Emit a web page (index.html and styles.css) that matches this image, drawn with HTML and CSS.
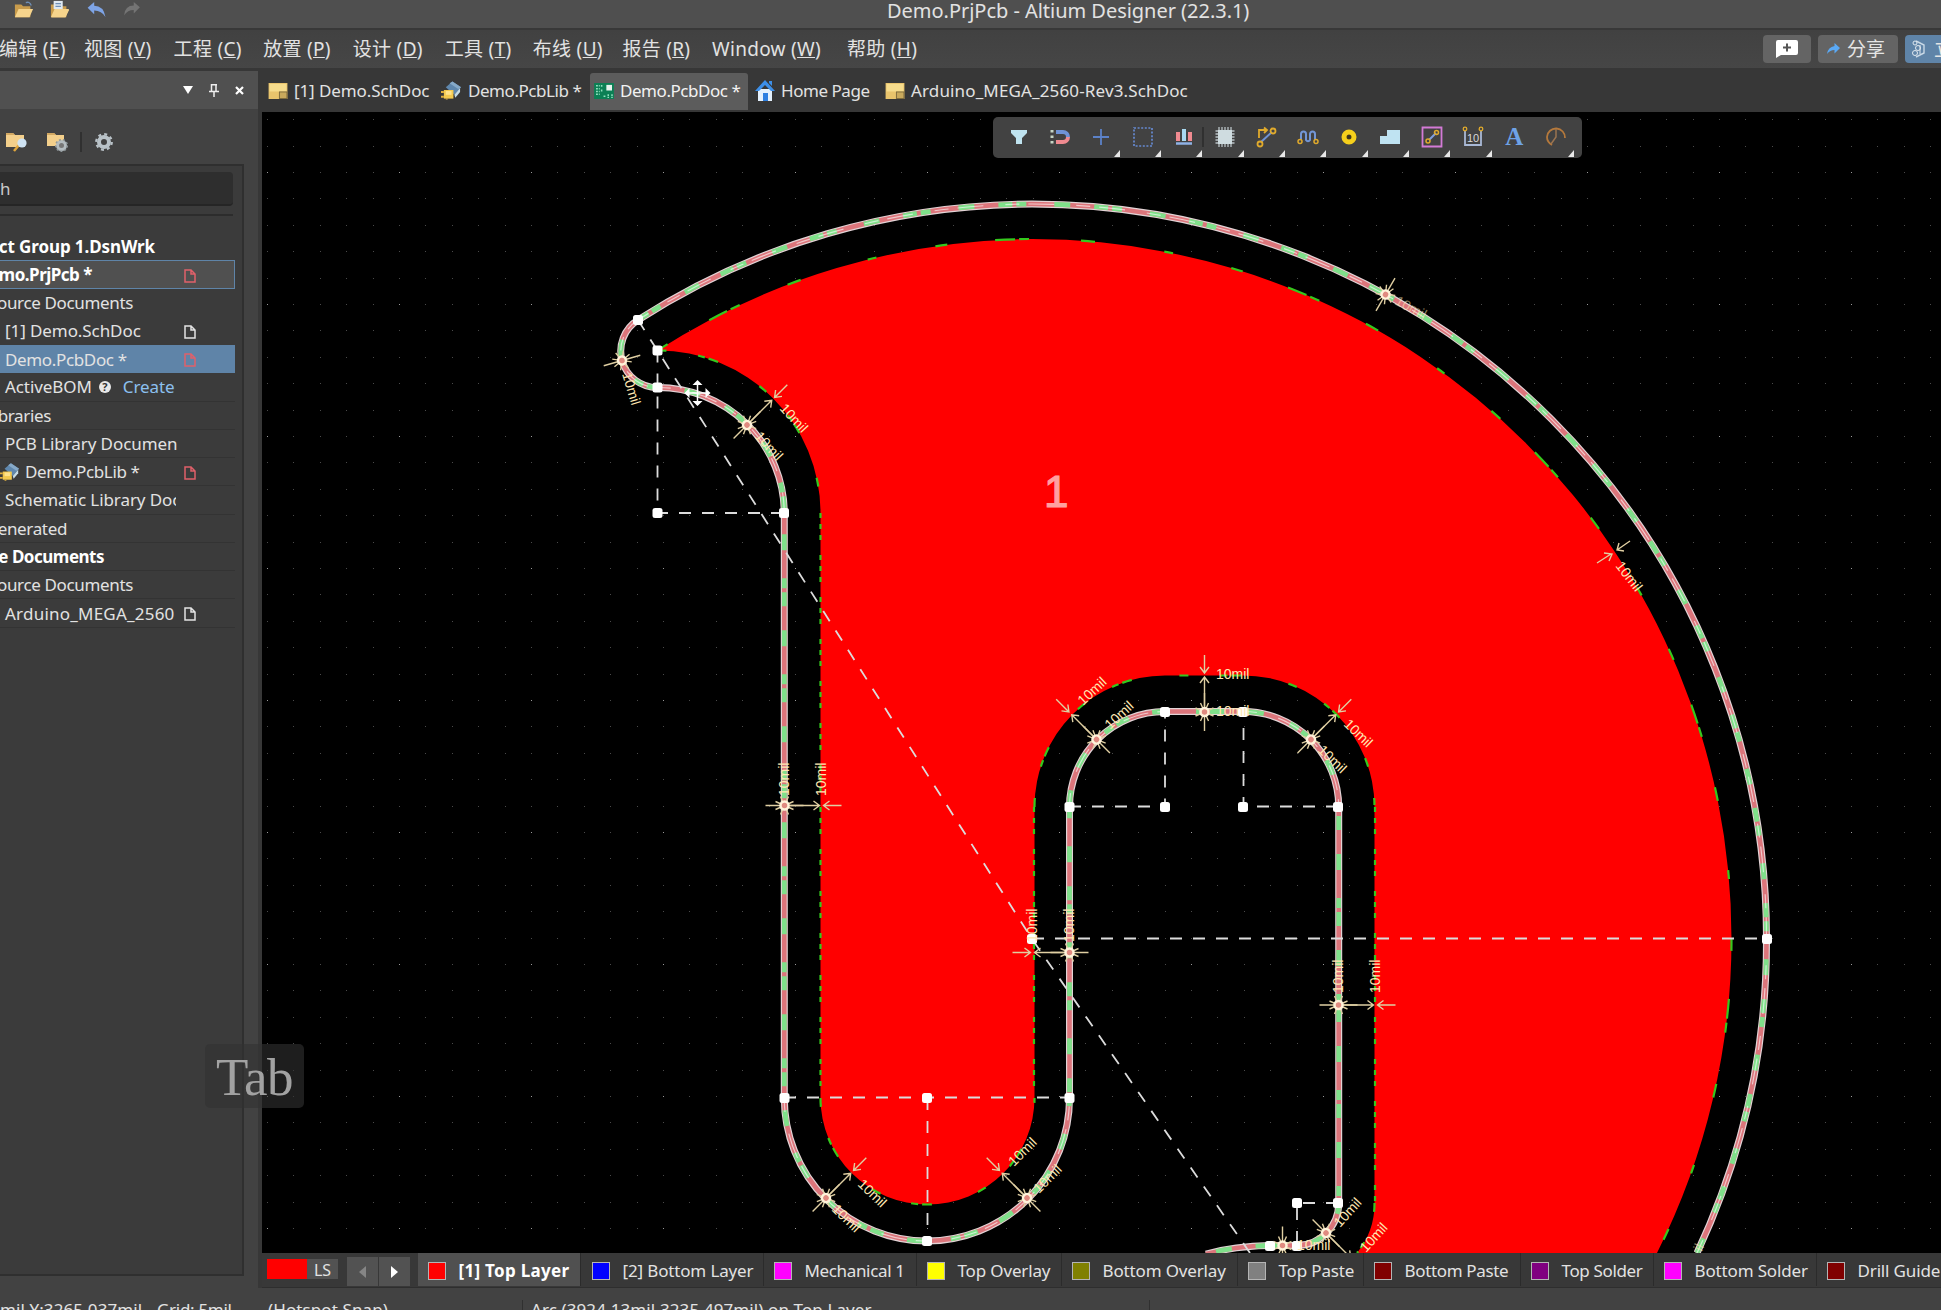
FILE: index.html
```html
<!DOCTYPE html>
<html lang="zh-CN">
<head>
<meta charset="utf-8">
<title>Demo.PrjPcb - Altium Designer (22.3.1)</title>
<link rel="stylesheet" href="styles.css">
</head>
<body>
<svg class="defs" width="0" height="0" aria-hidden="true">
  <defs>
    <symbol id="i-sch" viewBox="0 0 20 17"><path d="M0 0h20v17H0z" fill="#e9c46c"/><path d="M1 1h18v8H1z" fill="#f6dc8c"/><path d="M11 9h9v8h-9z" fill="#7d6a3c"/><path d="M12 10h7v6h-7z" fill="#c9a95c"/></symbol>
    <symbol id="i-lib" viewBox="0 0 22 19"><path d="M5 6l7-6 9 6-7 8z" fill="#5f87ad"/><path d="M12 0l9 6-3 2-9-6z" fill="#86a9c8"/><path d="M14 14l6-7v4l-5 6z" fill="#c5dbe6"/><path d="M3 9h10v9H3z" fill="#f3c94f"/><path d="M5 10h6v4H5z" fill="#ffe28a"/><path d="M0 11h3M0 16h3M6 18v1" stroke="#e0b040" stroke-width="2"/></symbol>
    <symbol id="i-pcb" viewBox="0 0 21 17"><path d="M0 0h21v17H0z" fill="#0b7f54"/><path d="M13 2h6v6h-6z" fill="#e6f3ee"/><path d="M2 3h4M2 6h4M2 9h4M2 12h4M8 2v3M8 7v3M10 14h3M15 12v4M19 12v4" stroke="#8fe0bd" stroke-width="1.6" stroke-dasharray="2 1"/></symbol>
    <symbol id="i-doc" viewBox="0 0 12 14"><path d="M1 1h6l4 4v8H1zM7 1v4h4" fill="none" stroke="currentColor" stroke-width="1.5"/></symbol>
    <symbol id="i-folder" viewBox="0 0 22 19"><path d="M1 4h7l2 2h8v12H1z" fill="#c99c4c"/><path d="M5 9h16l-4 9H1z" fill="#f6d48c"/></symbol>
    <symbol id="i-tri" viewBox="0 0 6 7"><path d="M6 0v7H0z" fill="#e8e8e8"/></symbol>
  </defs>
</svg>

<div class="app">
  <header class="titlebar">
    <div class="quick">
      <svg class="q-open" viewBox="0 0 22 20"><use href="#i-folder" width="22" height="19"/><path d="M13 2q4-2 6 3" fill="none" stroke="#6f8fb5" stroke-width="1.5"/></svg>
      <svg class="q-save" viewBox="0 0 22 20"><use href="#i-folder" width="22" height="19"/><path d="M4 0h10v9H4z" fill="#dfe9f2"/><path d="M6 3h6M6 6h6" stroke="#6f8fb5" stroke-width="1.4"/><path d="M5 10h16l-4 8H2z" fill="#f6d48c"/></svg>
      <svg class="q-undo" viewBox="0 0 20 16"><path d="M0 6l7-6v4q10 0 12 12-4-7-12-7v4z" fill="#7ea4e6"/></svg>
      <svg class="q-redo" viewBox="0 0 20 16"><path d="M19 6l-7-6v4Q2 4 1 15q4-6 11-6v4z" fill="#747474"/></svg>
    </div>
    <h1>Demo.PrjPcb - Altium Designer (22.3.1)</h1>
  </header>

  <nav class="menubar">
    <span class="m m1">编辑 (<u>E</u>)</span><span class="m">视图 (<u>V</u>)</span><span class="m">工程 (<u>C</u>)</span><span class="m">放置 (<u>P</u>)</span><span class="m m5">设计 (<u>D</u>)</span><span class="m m6">工具 (<u>T</u>)</span><span class="m">布线 (<u>U</u>)</span><span class="m">报告 (<u>R</u>)</span><span class="m m9">Window (<u>W</u>)</span><span class="m">帮助 (<u>H</u>)</span>
    <div class="actions">
      <button class="btn btn-note"><svg width="22" height="18" viewBox="0 0 22 18"><path d="M2 0h18q2 0 2 2v11q0 2-2 2H5l-5 3V2q0-2 2-2z" fill="#fff"/><path d="M11 3.500v8M7 7.500h8" stroke="#555" stroke-width="2"/></svg></button>
      <button class="btn btn-share"><svg width="13" height="12" viewBox="0 0 13 12"><path d="M13 5L7.500 0v3Q1 4 0 11q3-4 7.500-4v3.500z" fill="#5aa9f5"/></svg><span>分享</span></button>
      <button class="btn btn-blue"><svg width="13" height="18" viewBox="0 0 13 18"><path d="M4 1l8 4v8l-8 4" fill="none" stroke="#c8d8e6" stroke-width="1.400"/><circle cx="3" cy="3" r="2" fill="none" stroke="#dfe8ef"/><circle cx="6" cy="8" r="2.500" fill="none" stroke="#dfe8ef"/><circle cx="3" cy="13" r="2.500" fill="none" stroke="#dfe8ef"/><path d="M8 5v9" stroke="#dfe8ef"/></svg><span>立</span></button>
    </div>
  </nav>

  <div class="main">
    <aside class="panel">
      <div class="panel-head">
        <svg width="10" height="8" viewBox="0 0 10 8"><path d="M0 0h10L5 8z" fill="#fff"/></svg>
        <svg width="10" height="13" viewBox="0 0 10 13"><path d="M2.500 0v7M7 0v7M2 .700h6M0 7.500h10M5 8v5" stroke="#eee" stroke-width="1.500" fill="none"/></svg>
        <svg width="9" height="9" viewBox="0 0 9 9"><path d="M1 1l7 7M8 1L1 8" stroke="#fff" stroke-width="2.200"/></svg>
      </div>
      <div class="panel-tools">
        <svg width="22" height="20" viewBox="0 0 22 20"><path d="M0 1h7l2 2h9v12H0z" fill="#f3cf8b"/><path d="M0 1h7l2 2H0z" fill="#d2a862"/><path d="M13 13l-5 6" stroke="#e0a63c" stroke-width="2.500"/><circle cx="16" cy="11" r="4.600" fill="#cfe3f3"/></svg>
        <svg width="21" height="20" viewBox="0 0 21 20"><path d="M0 1h7l2 2h8v11H0z" fill="#f3cf8b"/><path d="M0 1h7l2 2H0z" fill="#d2a862"/><circle cx="14.500" cy="13.500" r="4" fill="#777" stroke="#b4bcc0" stroke-width="3"/><circle cx="14.500" cy="13.500" r="5.800" fill="none" stroke="#8f989c" stroke-width="1.500" stroke-dasharray="2 2"/></svg>
        <i></i>
        <svg width="18" height="18" viewBox="0 0 18 18"><circle cx="9" cy="9" r="5" fill="none" stroke="#b9c2c8" stroke-width="4"/><circle cx="9" cy="9" r="7.800" fill="none" stroke="#b9c2c8" stroke-width="2.200" stroke-dasharray="3 3.120"/></svg>
      </div>
      <div class="tree-frame">
        <div class="search">h</div>
        <div class="rule"></div>
        <ul class="tree">
          <li class="b e155"><span>ct Group 1.DsnWrk</span></li>
          <li class="b e92 project"><span>mo.PrjPcb *</span><svg class="doc red"><use href="#i-doc"/></svg></li>
          <li class="e133"><span>ource Documents</span></li>
          <li class="leaf mid"><span>[1] Demo.SchDoc</span><svg class="doc"><use href="#i-doc"/></svg></li>
          <li class="leaf selected"><span>Demo.PcbDoc *</span><svg class="doc red"><use href="#i-doc"/></svg></li>
          <li class="leaf line mid"><span>ActiveBOM</span><b class="help">?</b><em>Create</em></li>
          <li class="e51 line"><span>braries</span></li>
          <li class="leaf line mid"><span>PCB Library Documen</span></li>
          <li class="lib line"><svg width="20" height="18"><use href="#i-lib"/></svg><span>Demo.PcbLib *</span><svg class="doc red"><use href="#i-doc"/></svg></li>
          <li class="leaf line clip mid"><span>Schematic Library Doc</span></li>
          <li class="e67 line"><span>enerated</span></li>
          <li class="b e104 line"><span>e Documents</span></li>
          <li class="e133 line"><span>ource Documents</span></li>
          <li class="leaf line wide"><span>Arduino_MEGA_2560</span><svg class="doc"><use href="#i-doc"/></svg></li>
        </ul>
      </div>
    </aside>

    <section class="editor">
      <div class="tabs">
        <div class="tab t1"><svg width="20" height="16"><use href="#i-sch"/></svg><span>[1] Demo.SchDoc</span></div>
        <div class="tab t2"><svg width="21" height="19"><use href="#i-lib"/></svg><span>Demo.PcbLib *</span></div>
        <div class="tab t3 active"><svg width="20" height="16"><use href="#i-pcb"/></svg><span>Demo.PcbDoc *</span></div>
        <div class="tab t4"><svg width="20" height="21" viewBox="0 0 20 21"><path d="M3 9h14v12H3z" fill="#e4f0fc"/><path d="M0 11L10 0l10 11h-4l-6-6-6 6z" fill="#3d8fe8"/><path d="M14 1h3v5l-3-3z" fill="#3d8fe8"/><path d="M8 13h5v8H8z" fill="#2e7fe0"/></svg><span>Home Page</span></div>
        <div class="tab t5"><svg width="20" height="16"><use href="#i-sch"/></svg><span>Arduino_MEGA_2560-Rev3.SchDoc</span></div>
      </div>

      <div class="canvas">
        <svg class="board" width="1679" height="1141" viewBox="262 112 1679 1141">
          <defs>
            <pattern id="dots" patternUnits="userSpaceOnUse" x="267" y="172" width="132" height="132">
              <path fill="#4a4a4a" d="M26 0h1v1h-1zM53 0h1v1h-1zM79 0h1v1h-1zM106 0h1v1h-1zM0 26h1v1h-1zM26 26h1v1h-1zM53 26h1v1h-1zM79 26h1v1h-1zM106 26h1v1h-1zM0 53h1v1h-1zM26 53h1v1h-1zM53 53h1v1h-1zM79 53h1v1h-1zM106 53h1v1h-1zM0 79h1v1h-1zM26 79h1v1h-1zM53 79h1v1h-1zM79 79h1v1h-1zM106 79h1v1h-1zM0 106h1v1h-1zM26 106h1v1h-1zM53 106h1v1h-1zM79 106h1v1h-1zM106 106h1v1h-1z"/>
              <path fill="#999" d="M0 0h1v1h-1z"/>
            </pattern>
            <path id="outline" d="M1697 1253A734.500 734.500 0 0 0 1766.500 938.500A734.500 734.500 0 0 0 1032 204A734.500 734.500 0 0 0 638 320A36.500 36.500 0 0 0 657.500 387.500A126.500 126 0 0 1 784.300 513V1098A142.600 143 0 0 0 1069.500 1098V807A95.500 95.500 0 0 1 1165 711.500H1243A95.500 95.500 0 0 1 1338.700 807V1203A42 42.500 0 0 1 1297 1245.500H1270Q1235 1246 1206 1254"/>
            <g id="star">
              <path class="ray" d="M-19 0H19M-9-4L9 4M-9 4L9-4M-4-9L4 9M4-9L-4 9"/>
              <circle r="4" fill="#e08a80" stroke="#fff3da" stroke-width="2.500"/>
            </g>
            <g id="dim">
              <path class="ray" d="M0 0H35M29-4.500L35 0l-6 4.500M57 0H39M45-4.500L39 0l6 4.500"/>
              <use href="#star"/>
            </g>
            <rect id="h" x="-5" y="-5" width="10" height="10" rx="2.500" fill="#fff"/>
          </defs>
          <rect x="262" y="112" width="1679" height="1141" fill="#000"/>
          <rect x="262" y="112" width="1679" height="1141" fill="url(#dots)"/>

          <path fill="#f00" d="M657.500 350.500A699 699 0 0 1 1032 239A699.500 699.500 0 0 1 1731.500 938.500A699.500 699.500 0 0 1 1657 1253H1357A78 78 0 0 0 1374.500 1203V807A131.500 131.500 0 0 0 1243 675.500H1165A131 131.500 0 0 0 1034.500 807V1098A107 106.500 0 0 1 820.500 1098V513A162.500 162.500 0 0 0 657.500 350.500Z"/>
          <g class="clear">
            <path d="M820.500 513V1098M1034 807V1098M1375 807V1203" stroke-dasharray="5 6 5 6 5 15"/>
            <path d="M657.500 350.500A699 699 0 0 1 1032 239A699.500 699.500 0 0 1 1731.500 938.500A699.500 699.500 0 0 1 1657 1253" stroke-dasharray="12 48 20 4 10 52 14 70 9 60"/>
            <path d="M657.500 350.500A162.500 162.500 0 0 1 820.500 513M1034.500 807A131 131.500 0 0 1 1165 675.500H1243A131.500 131.500 0 0 1 1374.500 807M820.500 1098A107 106.500 0 0 0 1034.500 1098M1374.500 1203A78 78 0 0 1 1357 1253" stroke-dasharray="9 32 7 4 10 48"/>
          </g>

          <g fill="none">
            <use href="#outline" stroke="#e2d3d6" stroke-width="7"/>
            <use href="#outline" stroke="#dc757b" stroke-width="4.600"/>
            <use href="#outline" stroke="#7fe08a" stroke-width="4.800" stroke-dasharray="16 28 10 4 14 24"/>
            <path class="glint" d="M1697 1253A734.500 734.500 0 0 0 1766.500 938.500A734.500 734.500 0 0 0 1032 204A734.500 734.500 0 0 0 638 320A36.500 36.500 0 0 0 657.500 387.500A126.500 126 0 0 1 784.300 513M784.300 1098A142.600 143 0 0 0 1069.500 1098M1069.500 807A95.500 95.500 0 0 1 1165 711.500M1243 711.500A95.500 95.500 0 0 1 1338.700 807"/>
          </g>

          <path class="guide" d="M638 320L1032 939L1250 1253M657.500 350.500V513H784M1032 938.500H1766M784 1097.500H1070M927.500 1098V1241M1069 806.500H1165V711M1338 806.500H1243.500V711M1338 1203H1297V1245"/>

          <g>
            <use href="#star" transform="translate(622 360.500) rotate(-16)"/>
            <use href="#dim" transform="translate(747 425) rotate(-45)"/>
            <use href="#dim" transform="translate(784.500 805.500)"/>
            <use href="#dim" transform="translate(1069.500 952.500) rotate(180)"/>
            <use href="#dim" transform="translate(1096.500 739.500) rotate(-135)"/>
            <use href="#dim" transform="translate(1204.500 712) rotate(-90)"/>
            <use href="#dim" transform="translate(1311 739.500) rotate(-45)"/>
            <use href="#dim" transform="translate(1338.500 1005)"/>
            <use href="#dim" transform="translate(826 1198) rotate(-45)"/>
            <use href="#dim" transform="translate(1027 1198) rotate(-135)"/>
            <use href="#star" transform="translate(1385.500 294.500) rotate(-60)"/>
            <use href="#dim" transform="translate(1326 1233) rotate(45)"/>
            <use href="#star" transform="translate(1282.500 1245.500) rotate(-90)"/>
            <path class="ray" d="M1597 563L1611 554M1604 553l8 1-3 7M1630 541L1617 550M1619 543l-2 7 7 1"/>
          </g>

          <g fill="#fff">
            <use href="#h" x="638" y="320"/><use href="#h" x="657.500" y="350.500"/><use href="#h" x="657.500" y="387.500"/><use href="#h" x="657.500" y="513"/><use href="#h" x="784" y="513"/>
            <use href="#h" x="784.500" y="1098"/><use href="#h" x="927" y="1098"/><use href="#h" x="1069.500" y="1098"/><use href="#h" x="927" y="1241"/>
            <use href="#h" x="1032" y="939"/><use href="#h" x="1767" y="939"/>
            <use href="#h" x="1069.500" y="807"/><use href="#h" x="1165" y="807"/><use href="#h" x="1243" y="807"/><use href="#h" x="1338" y="807"/><use href="#h" x="1165" y="712"/><use href="#h" x="1243" y="712"/>
            <use href="#h" x="1297" y="1203"/><use href="#h" x="1338" y="1203"/><use href="#h" x="1270" y="1246"/><use href="#h" x="1297" y="1246"/>
          </g>

          <g class="mil">
            <text transform="translate(622 374) rotate(73)">10mil</text>
            <text transform="translate(779 409) rotate(47)">10mil</text>
            <text transform="translate(754 437) rotate(47)">10mil</text>
            <text transform="translate(789 796) rotate(-90)">10mil</text>
            <text transform="translate(826 796) rotate(-90)">10mil</text>
            <text transform="translate(1074 942) rotate(-90)">10mil</text>
            <text transform="translate(1037 942) rotate(-90)">10mil</text>
            <text transform="translate(1110 730) rotate(-43)">10mil</text>
            <text transform="translate(1083 706) rotate(-43)">10mil</text>
            <text transform="translate(1216 716)">10mil</text>
            <text transform="translate(1216 679)">10mil</text>
            <text transform="translate(1343 725) rotate(44)">10mil</text>
            <text transform="translate(1317 751) rotate(44)">10mil</text>
            <text transform="translate(1343 993) rotate(-90)">10mil</text>
            <text transform="translate(1380 993) rotate(-90)">10mil</text>
            <text transform="translate(857 1185) rotate(44)">10mil</text>
            <text transform="translate(831 1210) rotate(44)">10mil</text>
            <text transform="translate(1014 1167) rotate(-45)">10mil</text>
            <text transform="translate(1039 1194) rotate(-45)">10mil</text>
            <text class="dim" transform="translate(1394 304) rotate(28)">10mil</text>
            <text transform="translate(1615 566) rotate(52)">10mil</text>
            <text transform="translate(1340 1228) rotate(-48)">10mil</text>
            <text transform="translate(1366 1253) rotate(-48)">10mil</text>
            <text transform="translate(1297 1250)">10mil</text>
            <text class="dim" transform="translate(1702 1252) rotate(-68)">il</text>
          </g>
          <text class="net" x="1044" y="507">1</text>

          <g transform="translate(697.500 393)">
            <path d="M-9 0H9M0-9V9" stroke="#fff" stroke-width="1.500"/>
            <path d="M0-13l5 5h-10zM0 13l5-5h-10zM-13 0l5-5v10zM13 0l-5-5v10z" fill="#fff"/>
          </g>
        </svg>

        <div class="toolbar">
          <span><svg viewBox="-12 -12 24 24"><path d="M-8-7H8V-4L3 1V7H-3V1L-8-4z" fill="#bfe3ef"/></svg></span>
          <span><svg viewBox="-12 -12 24 24"><path d="M-4-5H3A5 5 0 0 1 8 0" fill="none" stroke="#6f93d6" stroke-width="4"/><path d="M-4 5H3A5 5 0 0 0 8 0" fill="none" stroke="#f08a90" stroke-width="4"/><path d="M-8-7v14" stroke="#c6d6c6" stroke-width="3" stroke-dasharray="2.500 3"/></svg></span>
          <span><svg viewBox="-12 -12 24 24"><path d="M0-8V8M-8 0H8" stroke="#5c82c8" stroke-width="1.800"/></svg><svg class="tri"><use href="#i-tri"/></svg></span>
          <span><svg viewBox="-12 -12 24 24"><path d="M-9-9H9V9H-9z" fill="none" stroke="#6689d0" stroke-width="1.700" stroke-dasharray="2 1.600"/></svg><svg class="tri"><use href="#i-tri"/></svg></span>
          <span class="sep"><svg viewBox="-12 -12 24 24"><path d="M-8-5h4V4h-4zM4-5H8V4H4z" fill="#f08a90"/><path d="M-2-8H2V4H-2z" fill="#a8d8f0"/><path d="M-8 6.500H8" stroke="#8fb2e6" stroke-width="2.500"/></svg><svg class="tri"><use href="#i-tri"/></svg></span>
          <span><svg viewBox="-12 -12 24 24"><path d="M-6-10V10M-3-10V10M0-10V10M3-10V10M6-10V10M-9.500-6h19M-9.500-3h19M-9.500 0h19M-9.500 3h19M-9.500 6h19" stroke="#b9c2c6" stroke-width="1.300"/><path d="M-7-7H7V7H-7z" fill="#cfdce0"/></svg><svg class="tri"><use href="#i-tri"/></svg></span>
          <span><svg viewBox="-12 -12 24 24"><path d="M-5 5L6-5" stroke="#6f93d6" stroke-width="2"/><path d="M-7 1v-8H0M-2-9.500L1-7l-3 3" fill="none" stroke="#e0aa2c" stroke-width="1.800"/><circle cx="-6" cy="7" r="2.500" fill="none" stroke="#e0aa2c" stroke-width="1.800"/><circle cx="7" cy="-6" r="2.500" fill="none" stroke="#e0aa2c" stroke-width="1.800"/></svg><svg class="tri"><use href="#i-tri"/></svg></span>
          <span><svg viewBox="-12 -12 24 24"><path d="M-7 3V-3a2.500 2.500 0 0 1 5 0V3a2.300 2.300 0 0 0 4 0V-3a2.500 2.500 0 0 1 5 0V3" fill="none" stroke="#7296d6" stroke-width="2"/><circle cx="-8" cy="4.500" r="2" fill="#444" stroke="#e0aa2c" stroke-width="1.500"/><circle cx="8" cy="4.500" r="2" fill="#444" stroke="#e0aa2c" stroke-width="1.500"/></svg><svg class="tri"><use href="#i-tri"/></svg></span>
          <span><svg viewBox="-12 -12 24 24"><circle r="5" fill="#5a4a10" stroke="#f5cf1c" stroke-width="5"/><circle r="2" fill="#3a3420"/></svg><svg class="tri"><use href="#i-tri"/></svg></span>
          <span><svg viewBox="-12 -12 24 24"><path d="M-10 7V-1H-3V-7H10V7z" fill="#bfe3f2"/></svg><svg class="tri"><use href="#i-tri"/></svg></span>
          <span><svg viewBox="-12 -12 24 24"><path d="M-9.500-9.500H9.500V9.500H-9.500z" fill="none" stroke="#d37ad6" stroke-width="1.800"/><path d="M-3 3L4-4" stroke="#7f9fe0" stroke-width="2"/><circle cx="-4" cy="4" r="2" fill="none" stroke="#e0aa2c" stroke-width="1.500"/><circle cx="4.500" cy="-4.500" r="2" fill="none" stroke="#e0aa2c" stroke-width="1.500"/></svg><svg class="tri"><use href="#i-tri"/></svg></span>
          <span><svg viewBox="-12 -12 24 24"><path d="M-8-6V8H8V-6" fill="none" stroke="#a9b9d6" stroke-width="1.800"/><circle cx="-8" cy="-8" r="1.800" fill="none" stroke="#e0aa2c" stroke-width="1.300"/><circle cx="8" cy="-8" r="1.800" fill="none" stroke="#e0aa2c" stroke-width="1.300"/><text x="0" y="5" text-anchor="middle" class="ten">10</text></svg><svg class="tri"><use href="#i-tri"/></svg></span>
          <span class="letter">A</span>
          <span><svg viewBox="-12 -12 24 24"><path d="M-4 8Q-9 5-9 0A9 9 0 0 1 9 1" fill="none" stroke="#b5793c" stroke-width="1.800"/><path d="M0-8V0l-5 7" fill="none" stroke="#9b7450" stroke-width="1.500"/></svg><svg class="tri"><use href="#i-tri"/></svg></span>
        </div>
      </div>

      <div class="layers">
        <div class="set"><i></i><span>LS</span></div>
        <div class="arrows"><span><svg width="7" height="12" viewBox="0 0 7 12"><path d="M7 0v12L0 6z" fill="#858585"/></svg></span><span><svg width="7" height="12" viewBox="0 0 7 12"><path d="M0 0v12l7-6z" fill="#fff"/></svg></span></div>
        <div class="layer l1 on"><i class="c-red"></i><span>[1] Top Layer</span></div>
        <div class="layer l2"><i class="c-blue"></i><span>[2] Bottom Layer</span></div>
        <div class="layer l3"><i class="c-mag"></i><span>Mechanical 1</span></div>
        <div class="layer l4"><i class="c-yel"></i><span>Top Overlay</span></div>
        <div class="layer l5"><i class="c-olive"></i><span>Bottom Overlay</span></div>
        <div class="layer l6"><i class="c-grey"></i><span>Top Paste</span></div>
        <div class="layer l7"><i class="c-maroon"></i><span>Bottom Paste</span></div>
        <div class="layer l8"><i class="c-purple"></i><span>Top Solder</span></div>
        <div class="layer l9"><i class="c-mag"></i><span>Bottom Solder</span></div>
        <div class="layer l10"><i class="c-maroon"></i><span>Drill Guide</span></div>
      </div>
    </section>
  </div>

  <footer class="status">
    <span class="s1">mil Y:3265.037mil</span><span class="s2">Grid: 5mil</span><span class="s3">(Hotspot Snap)</span><span class="s4">Arc (3924.13mil,3235.497mil) on Top Layer</span><span class="s5"></span>
  </footer>
  <div class="keycast">Tab</div>
</div>
</body>
</html>
```
FILE: styles.css
```css
* { box-sizing: border-box; }
body {
  margin: 0;
  background: #424242;
  color: #e2e2e2;
  font: 17px/1 "Noto Sans", "Open Sans", "Noto Sans CJK SC", sans-serif;
}
.defs { position: absolute; }
.app {
  position: relative;
  width: 1941px;
  height: 1310px;
  overflow: hidden;
  display: flex;
  flex-direction: column;
}
svg { display: block; flex: none; }
span { white-space: nowrap; }

/* title bar */
.titlebar {
  height: 30px;
  flex: none;
  display: flex;
  background: #4f4f4f;
  border-bottom: 2px solid #383838;
}
.quick { width: 887px; flex: none; display: flex; align-items: flex-start; padding-left: 14px; }
.quick svg { width: 20px; height: 20px; }
.quick .q-save { margin-left: 16px; }
.quick .q-undo { height: 15px; margin: 2px 0 0 17px; }
.quick .q-redo { width: 18px; height: 14px; margin: 2px 0 0 16px; }
h1 { margin: 0; font-size: 20px; font-weight: 400; line-height: 22px; letter-spacing: -.03px; white-space: nowrap; }

/* menu bar */
.menubar {
  height: 38px;
  flex: none;
  display: flex;
  align-items: center;
  background: linear-gradient(#414141, #464646);
  font-size: 19px;
  letter-spacing: .3px;
}
.m { width: 89.600px; flex: none; line-height: 38px; }
.m.m1 { width: 85px; margin-left: -1px; }
.m.m5 { width: 92px; }
.m.m6 { width: 88px; }
.m.m9 { width: 135px; }
.actions { display: flex; gap: 7px; margin-left: auto; width: 178px; flex: none; }
.btn {
  height: 28px;
  border: 0;
  border-radius: 4px;
  padding: 0;
  color: #e4e4e4;
  background: #646464;
  display: flex;
  align-items: center;
  flex: none;
  font: 19px/28px "Noto Sans", "Noto Sans CJK SC", sans-serif;
}
.btn-note { width: 48px; justify-content: center; }
.btn-share { width: 80px; padding-left: 9px; gap: 7px; }
.btn-blue { width: 60px; padding-left: 7px; gap: 9px; background: #5f84a8; }

/* projects panel */
.main { flex: none; height: 1220px; display: flex; background: #373737; }
.panel {
  width: 258px;
  margin-top: 3px;
  height: 1217px;
  flex: none;
  background: #424242;
  overflow: hidden;
}
.panel-head {
  height: 38px;
  background: #505050;
  display: flex;
  align-items: center;
  gap: 16px;
  padding-left: 183px;
}
.panel-tools { height: 55px; display: flex; align-items: center; padding: 10px 0 0 6px; }
.panel-tools svg + svg { margin-left: 19px; }
.panel-tools i { width: 2px; height: 20px; background: #303030; margin: 0 13px 0 12px; }
.tree-frame {
  width: 244px;
  height: 1112px;
  border: solid #2f2f2f;
  border-width: 2px 2px 2px 0;
  background: #3b3b3b;
  padding-top: 6px;
}
.search {
  width: 233px;
  height: 34px;
  background: #2e2e2e;
  border-bottom: 2px solid #252525;
  border-radius: 0 4px 4px 0;
  line-height: 34px;
  color: #c9c9c9;
}
.rule { width: 233px; height: 2px; background: #2c2c2c; margin-top: 8px; }
.tree { list-style: none; margin: 16px 0 0; padding: 0; width: 235px; }
.tree li {
  height: 28.280px;
  display: flex;
  align-items: center;
  position: relative;
  letter-spacing: -.35px;
}
.tree li span { display: flex; justify-content: flex-end; flex: none; }
.tree .b { font-weight: 700; color: #fff; letter-spacing: -.5px; }
.tree .e155 { letter-spacing: -.1px; }
.tree .e155 span { width: 155px; }
.tree .e92 span { width: 92px; }
.tree .e133 span { width: 133px; }
.tree .e51 span { width: 51px; }
.tree .e67 span { width: 67px; }
.tree .e104 span { width: 104px; }
.tree .leaf { padding-left: 5px; }
.tree .mid { letter-spacing: -.08px; }
.tree .wide { letter-spacing: .22px; }
.tree .lib { gap: 5px; }
.tree .line { border-bottom: 1px solid #333; }
.tree .project { background: #505050; border: 1px solid #5f84a8; border-left: 0; }
.tree .selected { background: #5f84a8; }
.tree .clip span { width: 171px; overflow: hidden; justify-content: flex-start; line-height: 24px; }
.tree .doc { position: absolute; left: 184px; top: 8px; width: 12px; height: 14px; color: #e4e4e4; }
.tree .doc.red { color: #e0606a; }
.help {
  width: 12px; height: 12px; margin: 0 12px 0 7px;
  border-radius: 50%; background: #e8e8e8; color: #333;
  font-size: 11px; line-height: 12px; text-align: center; letter-spacing: 0;
}
.tree em { font-style: normal; color: #8cc0f0; }

/* editor */
.editor { width: 1679px; margin-left: 4px; display: flex; flex-direction: column; }
.tabs { height: 44px; flex: none; display: flex; padding: 5px 0 2px 3px; }
.tab { height: 37px; flex: none; display: flex; align-items: center; gap: 6px; padding: 0 0 2px 3px; letter-spacing: -.45px; }
.t1 { width: 173px; letter-spacing: -.1px; }
.t2 { width: 152px; }
.t3 { width: 158px; padding-left: 4px; }
.t4 { width: 134px; padding-left: 7px; }
.t5 { padding-left: 3px; letter-spacing: .14px; }
.tab.active { background: #5c5c5c; border-radius: 3px 3px 0 0; color: #f2f2f2; }

.canvas { height: 1141px; flex: none; position: relative; }
.clear { fill: none; stroke: #35c81e; stroke-width: 2.200; }
.guide { fill: none; stroke: #dcdcdc; stroke-width: 1.800; stroke-dasharray: 12 11; }
.glint { stroke: #fff; stroke-opacity: .6; stroke-width: 1.200; stroke-dasharray: 14 22 26 9; }
.ray { stroke: #e0cfa2; stroke-width: 1.400; fill: none; }
.mil { fill: #ffe8b4; font: 14px "Liberation Sans", Arial, sans-serif; }
.mil .dim { opacity: .55; }
.net { fill: #ffa0a0; stroke: #ffa0a0; stroke-width: 1.200; font: 44px "Liberation Sans", Arial, sans-serif; }
.ten { fill: #d8d8d8; font: 11px "Liberation Sans", Arial, sans-serif; }

.toolbar {
  position: absolute;
  left: 731px;
  top: 5px;
  width: 589px;
  height: 41px;
  display: flex;
  padding-left: 5px;
  background: #424242;
  border-radius: 5px;
}
.toolbar span { width: 41.300px; height: 40px; flex: none; display: flex; justify-content: center; align-items: center; position: relative; }
.toolbar svg { width: 24px; height: 24px; }
.toolbar .tri { position: absolute; right: 2px; bottom: 0; width: 6px; height: 7px; }
.toolbar .sep { background: linear-gradient(#303030, #303030) right center / 2px 20px no-repeat; }
.toolbar .letter { font: 700 25px "Liberation Serif", serif; color: #6ea2e6; }

/* layer tabs */
.layers { height: 35px; flex: none; display: flex; background: #383838; padding-left: 5px; border-bottom: 1px solid #2e2e2e; }
.set { width: 80px; display: flex; padding-top: 6px; flex: none; }
.set i { width: 40px; height: 20px; background: #f00; }
.set span { width: 31px; height: 20px; background: #525252; line-height: 22px; font-size: 16px; text-align: center; }
.arrows { width: 70.500px; display: flex; gap: 1px; padding-top: 4px; flex: none; }
.arrows span { width: 31px; height: 29px; background: #525252; display: flex; align-items: center; justify-content: center; }
.layer { height: 33px; flex: none; display: flex; align-items: center; padding: 2px 0 0 10px; border-right: 1px solid #2b2b2b; letter-spacing: -.15px; }
.layer i { width: 18px; height: 18px; border: 1px solid #b4b4b4; flex: none; margin-right: 13px; }
.layer.on { background: #505050; color: #fff; font-weight: 700; letter-spacing: .3px; }
.l1 { width: 163px; } .l2 { width: 183px; padding-left: 11px; } .l3 { width: 153px; } .l4 { width: 145px; }
.l5 { width: 176px; } .l6 { width: 126px; } .l7 { width: 157px; } .l8 { width: 133px; }
.l9 { width: 163px; } .l10 { width: 125px; }
.l3, .l7, .l8 { letter-spacing: -.35px; }
.c-red { background: #f00; } .c-blue { background: #00f; } .c-mag { background: #f0f; }
.c-yel { background: #ff0; } .c-olive { background: #808000; } .c-grey { background: #808080; }
.c-maroon { background: #800000; } .c-purple { background: #800080; }

/* status bar */
.status { height: 22px; flex: none; display: flex; background: #424242; font-size: 17px; letter-spacing: .1px; line-height: 20px; padding-top: 12px; overflow: hidden; }
.status span { flex: none; }
.s1 { width: 157px; } .s2 { width: 111px; letter-spacing: -.3px; } .s3 { width: 254px; }
.s4 { width: 627px; padding-left: 8px; border-left: 1px solid #303030; }
.s5 { width: 10px; border-left: 1px solid #303030; }

/* pressed-key overlay */
.keycast {
  position: absolute;
  left: 205px;
  top: 1044px;
  width: 99px;
  height: 64px;
  border-radius: 5px;
  background: rgba(50, 50, 50, .6);
  color: #a2a2a2;
  font: 53px/66px "Liberation Serif", serif;
  text-align: center;
  letter-spacing: -.5px;
}
```
